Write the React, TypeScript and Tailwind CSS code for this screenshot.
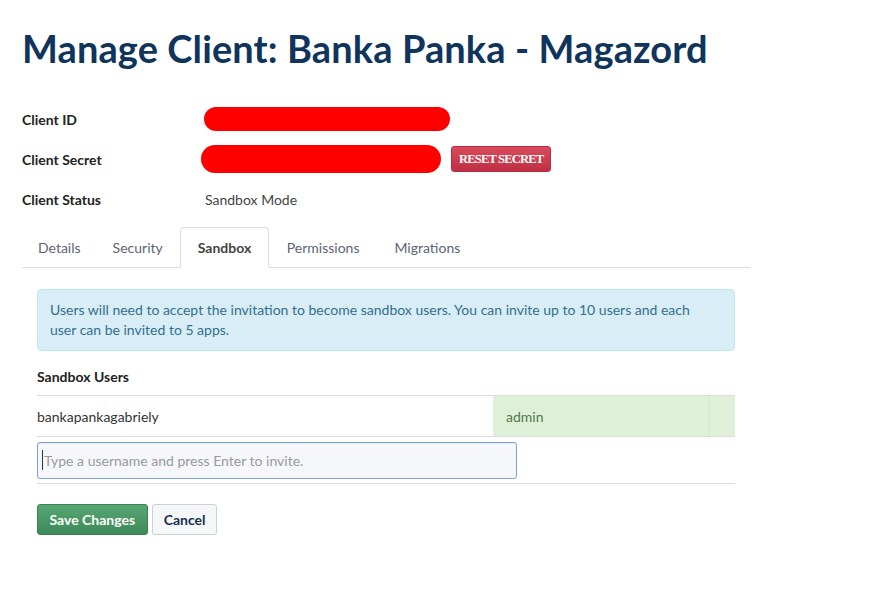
import React from 'react';

const TABS = ['Details', 'Security', 'Sandbox', 'Permissions', 'Migrations'];

const Redacted: React.FC<{ className?: string }> = ({ className }) => (
  <div className={`bg-[#ff0000] rounded-full ${className ?? ''}`} />
);

export default function App() {
  return (
    <div className="min-h-[600px] bg-white text-[#333] font-['Lato','Liberation_Sans',sans-serif] text-[14px] pl-[22px] pt-[24px]">
      <h1 className="text-[38px] leading-[48px] font-bold text-[#0f355c] tracking-[0.1px]">
        Manage Client: Banka Panka - Magazord
      </h1>

      {/* credentials */}
      <div className="mt-[27px] grid grid-cols-[182px_1fr] auto-rows-[40px] items-center">
        <div className="font-bold text-[#222]">Client ID</div>
        <div className="flex items-center">
          <Redacted className="w-[246px] h-[24px]" />
        </div>
        <div className="font-bold text-[#222]">Client Secret</div>
        <div className="flex items-center">
          <Redacted className="w-[240px] h-[28px] -ml-[3px]" />
          <button className="ml-[10px] h-[26px] px-[7px] rounded-[3px] border border-[#b52d3f] bg-gradient-to-b from-[#d94a5d] to-[#bf2f43] text-white text-[12.5px] font-bold font-['Liberation_Serif',serif] tracking-[-0.8px]">
            RESET SECRET
          </button>
        </div>
        <div className="font-bold text-[#222]">Client Status</div>
        <div className="text-[#444] pl-[1px]">Sandbox Mode</div>
      </div>

      {/* tabs */}
      <div className="w-[728px] mt-[8px] flex border-b border-[#ddd] h-[41px]">
        {TABS.map((t, i) =>
          t === 'Sandbox' ? (
            <div
              key={t}
              className="ml-px h-[41px] px-[17px] flex items-center border border-[#ddd] border-b-white rounded-t-[4px] bg-white font-bold text-[#444] -mb-px"
            >
              {t}
            </div>
          ) : (
            <div
              key={t}
              className={`h-[40px] flex items-center text-[#5b6573] ${i < 2 ? 'px-[16px]' : 'px-[17.5px]'}`}
            >
              {t}
            </div>
          )
        )}
      </div>

      {/* sandbox panel */}
      <div className="w-[728px] px-[15px] pt-[21px]">
        <div className="bg-[#d9edf7] border border-[#bce8f1] rounded-[4px] pl-[12px] pr-[30px] py-[10px] leading-[20px] text-[#31708f]">
          Users will need to accept the invitation to become sandbox users. You can invite up to 10 users and each
          user can be invited to 5 apps.
        </div>

        <div className="mt-[16px] font-bold text-[#222] leading-[20px]">Sandbox Users</div>

        <div className="mt-[8px] border-t border-[#ddd]">
          <div className="flex h-[41px] border-b border-[#ddd]">
            <div className="w-[456px] flex items-center text-[#333]">bankapankagabriely</div>
            <div className="w-[216px] bg-[#dff0d8] flex items-center pl-[13px] text-[#4e7a4a]">admin</div>
            <div className="flex-1 bg-[#dff0d8] border-l border-[#d3e6cb]" />
          </div>
          <div className="h-[47px] border-b border-[#ddd] flex items-center">
            <div className="w-[480px] h-[37px] border border-[#7b9fd4] rounded-[3px] bg-[#f5f7fa] flex items-center pl-[4px] shadow-[inset_0_1px_1px_rgba(0,0,0,0.05)]">
              <span className="w-px h-[20px] bg-[#333]" />
              <span className="text-[#9a9a9a] ml-[1px]">Type a username and press Enter to invite.</span>
            </div>
          </div>
        </div>

        <div className="mt-[20px] flex gap-[4px]">
          <button className="h-[31px] px-[11.5px] rounded-[3px] border border-[#3a8150] bg-gradient-to-b from-[#56a673] to-[#3d8a58] text-white font-bold text-[14px]">
            Save Changes
          </button>
          <button className="h-[31px] px-[11px] rounded-[3px] border border-[#ccd1d6] bg-[#f5f7f9] text-[#14304f] font-bold text-[14px]">
            Cancel
          </button>
        </div>
      </div>
    </div>
  );
}
